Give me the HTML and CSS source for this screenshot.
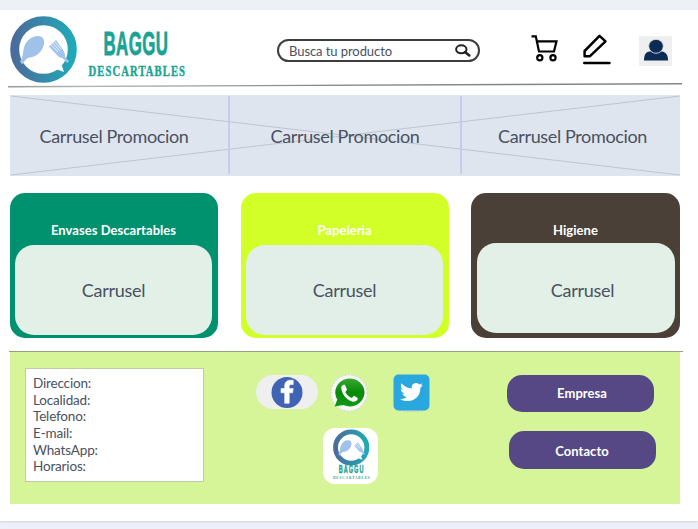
FILE: index.html
```html
<!DOCTYPE html>
<html lang="es">
<head>
<meta charset="utf-8">
<title>Baggu Descartables</title>
<link rel="stylesheet" href="styles.css">
</head>
<body>
<main class="page">
  <header class="header">
    <svg class="brand" viewBox="8 14 182 70" role="img" aria-label="Baggu Descartables">
      <defs>
        <linearGradient id="ring" x1="0" x2="1" y1="0" y2="0"><stop offset="0" stop-color="#4a6c9c"/><stop offset="1" stop-color="#20a9b6"/></linearGradient>
        <symbol id="emblem" viewBox="0 0 68 68">
          <circle cx="34" cy="34" r="28.8" fill="#fff" stroke="url(#ring)" stroke-width="9"/>
          <path d="M10.5 46C13 42 13.5 39 14 34C15.5 25 23 20 29 20.5C35 21 36 27 33 33C30 39 25 41.5 20 42C17 42.5 15.5 45 12.5 49Z" fill="#9fc1ea"/>
          <path d="M46.5 24.5L53 33.5Q56 38 55.5 41L59.5 46L57.5 47.5L53 42.5Q49.5 42.5 46.5 38.5L39.5 31Z" fill="#a3c3ed"/>
          <path d="M41 28.8L48.5 36.5M43 27.3L50.2 35.2M45 25.9L51.8 33.8" stroke="#fff" stroke-width=".8"/>
          <path d="M46 53.5L54.5 56.5L52 49Z" fill="#fff"/>
        </symbol>
      </defs>
      <use href="#emblem" x="9.5" y="15.5" width="68" height="68"/>
      <text class="brand-name" transform="translate(103.5 54.5) scale(.52 1)" textLength="124" lengthAdjust="spacing">BAGGU</text>
      <text class="brand-sub" transform="translate(88.5 76) scale(.76 1)" textLength="127">DESCARTABLES</text>
    </svg>
    <div class="search">
      <span>Busca tu producto</span>
      <svg width="16" height="13" viewBox="0 0 16 13"><ellipse cx="6.3" cy="5.3" rx="5.2" ry="4" fill="none" stroke="#222" stroke-width="2"/><path d="M10 8L14.3 11.5" stroke="#222" stroke-width="2.5" stroke-linecap="round"/></svg>
    </div>
    <nav class="tools">
      <svg class="cart" width="27" height="28" viewBox="0 0 27 28" fill="none" stroke="#000" stroke-width="2.2"><path d="M.5 1.3H4.8L8 16.5H23L25.5 6.3H5.8"/><circle cx="8.8" cy="22.8" r="2.6"/><circle cx="22" cy="22.8" r="2.6"/></svg>
      <svg class="pencil" width="28" height="31" viewBox="0 0 28 31" fill="none" stroke="#000" stroke-width="2.5"><path d="M1.6 22.2V17L16.5 1.9L22.5 7.4L7 22.2Z" stroke-linejoin="round"/><path d="M1.2 29H26.5" stroke-linecap="round" stroke-width="2.4"/></svg>
      <svg class="user" width="33" height="30" viewBox="0 0 33 30"><path fill="#efefef" d="M0 0H33V30H0Z"/><path d="M5 24.5C5 17 8 15.5 12 15.5H22C26 15.5 29 18 29 24.5Z" fill="#0a2c55"/><ellipse cx="17" cy="10.3" rx="7.3" ry="7" fill="#0a2c55" stroke="#efefef" stroke-width=".8"/></svg>
    </nav>
  </header>

  <svg class="rule" viewBox="0 0 674 6"><defs><linearGradient id="line"><stop offset="0" stop-color="#999"/><stop offset=".12" stop-color="#b5b5b5"/><stop offset=".5" stop-color="#858585"/><stop offset="1" stop-color="#858585"/></linearGradient></defs><path d="M0 3.1L674 .1V1.4L0 4.4Z" fill="url(#line)"/></svg>

  <section class="promos">
    <svg class="cross" viewBox="0 0 670 81" preserveAspectRatio="none"><path d="M1 1L670 80M1 80L670 1"/></svg>
    <div class="promo">Carrusel Promocion</div>
    <div class="promo">Carrusel Promocion</div>
    <div class="promo">Carrusel Promocion</div>
  </section>

  <section class="cards">
    <article class="card green"><h2>Envases Descartables</h2><div class="panel">Carrusel</div></article>
    <article class="card lime"><h2>Papeleria</h2><div class="panel">Carrusel</div></article>
    <article class="card brown"><h2>Higiene</h2><div class="panel">Carrusel</div></article>
  </section>

  <div class="footer-rule"></div>
  <footer class="footer">
    <address class="info">Direccion:<br>Localidad:<br>Telefono:<br>E-mail:<br>WhatsApp:<br>Horarios:</address>
    <div class="social">
      <div class="networks">
        <svg width="62" height="34" viewBox="0 0 62 34"><rect width="62" height="34" rx="17" fill="#efefef"/><circle cx="31" cy="17.5" r="15.5" fill="#4064b3"/><path d="M28.7 28.3V17.8H25V13.6H28.7V11C28.7 7 31 5.2 34.6 5.2H37.2V9.5H35.2C33.6 9.5 33.2 10.2 33.2 11.5V13.6H37.2L36.6 17.8H33.2V28.3Z" fill="#fff" stroke="#fff" stroke-width=".6"/></svg>
        <svg width="40" height="40" viewBox="0 0 40 40"><circle cx="20" cy="20" r="18.2" fill="#f7f7f4" stroke="#dcdcd7" stroke-width="1.5" stroke-dasharray="2 1.5"/><defs><linearGradient id="wa" x2="0" y2="1"><stop offset="0" stop-color="#38a832"/><stop offset=".5" stop-color="#078a08"/><stop offset="1" stop-color="#139817"/></linearGradient></defs><path d="M5.7 33.5L8.3 26.5A14.6 14 0 1 1 14.5 32Z" fill="url(#wa)"/><path d="M12.3 14.3C12.5 12.3 14.5 11.4 16 12L18 16.7L16.3 19C17.8 22 20 24 22.8 24.9L25 22.8L28.7 25C29 27.5 26 29.3 23.2 28.5C17.5 27.2 12.3 20.7 12.3 14.3Z" fill="#fff"/></svg>
        <svg width="37" height="38" viewBox="0 0 37 38"><path d="M3 35.7Q18 39 34 35.7" stroke="#c9cbd0" stroke-width="1.5" stroke-dasharray="2 1.5" fill="none"/><rect x=".5" y=".5" width="36" height="36" rx="5" fill="#29a8df"/><path transform="translate(5.2 5.5) scale(1.12)" d="M22 5C21.2 5.4 20.5 5.6 19.6 5.7C20.5 5.2 21.2 4.3 21.5 3.3C20.7 3.8 19.8 4.2 18.8 4.4C15.9 1.4 11.2 3.7 12.2 8.1C8.5 7.9 5.2 6.2 2.9 3.4C1.8 5.3 2.2 7.6 4.2 9C3.5 9 2.9 8.8 2.3 8.5C2.4 10.5 3.7 12.1 5.7 12.6C5.1 12.8 4.5 12.8 3.8 12.7C4.4 14.4 5.9 15.5 7.8 15.6C6 17 3.8 17.6 1.7 17.3C9.5 22 20 18 19.8 7.4C20.7 6.8 21.4 6 22 5Z" fill="#fff"/></svg>
      </div>
      <svg class="badge" width="55" height="56" viewBox="0 0 55 56"><rect width="55" height="56" rx="12" fill="#fff"/><use href="#emblem" x="9.7" y="1" width="37" height="37"/><text class="badge-name" transform="translate(15.7 44.8) scale(.55 1)" textLength="45" lengthAdjust="spacing">BAGGU</text><text class="badge-sub" transform="translate(10 51) scale(.72 1)" textLength="51">DESCARTABLES</text></svg>
    </div>
    <nav class="links"><a class="button">Empresa</a><a class="button shifted">Contacto</a></nav>
  </footer>
</main>
</body>
</html>
```
FILE: styles.css
```css
* { box-sizing: border-box; }
body { margin: 0; padding-top: 10px; height: 529px; overflow: hidden; background: #edf1f7; font-family: Lato, sans-serif; color: #4a5161; }
svg { display: block; flex-shrink: 0; }
.page { height: 511px; padding: 4px 16px 0 8px; background: #fff; box-shadow: 0 1px 2px #cdd2d9; }
.header { display: flex; height: 69px; align-items: flex-start; }
.brand { width: 182px; height: 70px; }
.brand-name { font: bold 32.5px "Liberation Sans", sans-serif; fill: #19a394; stroke: #19a394; stroke-width: .8px; }
.brand-sub { font: bold 14px "Liberation Serif", serif; fill: #19a394; stroke: #19a394; stroke-width: .4px; }
.search { display: flex; align-items: center; justify-content: space-between; width: 203px; height: 23px; margin: 25px 0 0 87px; padding: 0 7px 0 10px; border: 2px solid #3d3d3d; border-radius: 12px; font-size: 13px; letter-spacing: -.07px; }
.tools { display: flex; margin-left: 51px; }
.cart { margin-top: 21px; }
.pencil { margin: 20px 0 0 25px; }
.user { margin: 22px 0 0 28px; }
.rule { width: 674px; height: 6px; }
.promos { position: relative; display: grid; grid-template-columns: 220px 232px 218px; width: 670px; height: 80.5px; margin: 6px 0 0 2px; background: #dfe5ee; }
.cross { position: absolute; inset: 0; width: 670px; height: 81px; fill: none; stroke: #bdc4d4; stroke-width: 1; }
.promo { position: relative; display: flex; align-items: center; justify-content: center; margin: 1px 0 2px; padding: 3px 0 0; font-size: 18px; letter-spacing: -.37px; border-right: 2px solid #c9caee; }
.promo:first-of-type { padding-right: 10px; }
.promo:last-child { border: 0; padding-left: 3px; }
.cards { display: grid; grid-template-columns: 208px 208px 209px; column-gap: 23px; width: 671px; height: 145px; margin: 17.5px 0 0 1.5px; }
.card { height: 144.5px; padding: 29px 5.5px 0; border-radius: 15px; }
.card h2 { height: 17px; margin: 0 0 6px; color: #fff; text-align: center; font-size: 13px; line-height: 17px; letter-spacing: .05px; }
.green { background: #00916e; }
.lime { background: #d1ff27; }
.brown { margin-left: -.5px; margin-right: .5px; background: #4b4037; }
.panel { display: flex; align-items: center; justify-content: center; height: 90px; padding: 0 0 1px; border-radius: 19px; background: #e2f0e7; font-size: 18px; letter-spacing: -.25px; }
.lime .panel { background: #e2efe8; }
.brown h2 { margin-bottom: 4px; }
.brown .panel { padding: 4px 0 0 14px; }
.footer-rule { width: 674px; height: 1px; margin: 12.5px 0 0 1px; background: #939f83; }
.footer { display: flex; align-items: flex-start; width: 670.5px; height: 152px; margin-left: 1.5px; background: #d5f598; }
.info { width: 178.5px; height: 114px; margin: 16px 0 0 15.5px; padding: 6.5px 7px; border: 1px solid #bdcda1; background: #fff; font-size: 13.5px; letter-spacing: -.17px; font-style: normal; line-height: 16.65px; }
.social { width: 176px; margin: 22px 0 0 52px; }
.networks { display: flex; align-items: flex-start; height: 39px; }
.networks svg:nth-child(1) { margin-top: 1px; }
.networks svg:nth-child(2) { margin: -1px 0 0 11px; }
.networks svg:nth-child(3) { margin: 0 0 0 24px; }
.badge { margin: 15px 0 0 67px; }
.badge-name { font: bold 10px "Liberation Sans", sans-serif; fill: #19a394; stroke: #19a394; stroke-width: .4px; }
.badge-sub { font: bold 4.7px "Liberation Serif", serif; fill: #19a394; }
.links { display: grid; row-gap: 19px; margin: 23px 0 0 75px; }
.button { display: flex; align-items: center; justify-content: center; width: 147px; height: 37.5px; padding-left: 4px; border-radius: 15px; background: #564884; color: #fff; font-size: 13px; font-weight: bold; letter-spacing: .05px; }
.shifted { margin-left: 2px; padding: 3px 0 0; }
```
